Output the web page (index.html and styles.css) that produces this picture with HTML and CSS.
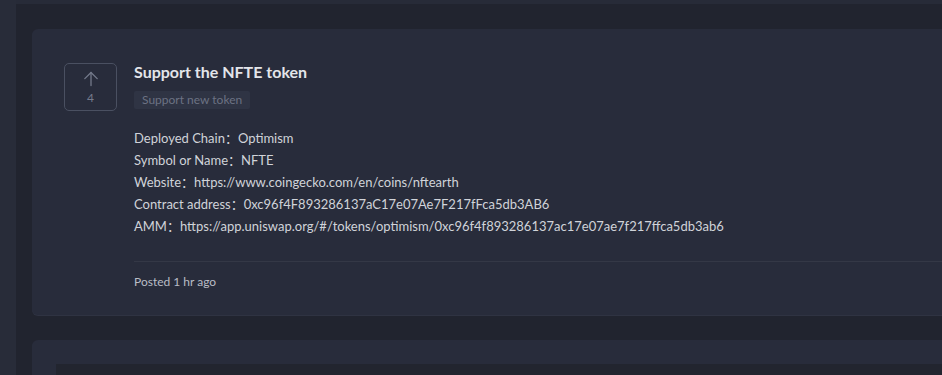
FILE: index.html
```html
<!DOCTYPE html>
<html>
<head>
    <meta charset="utf-8">
    <title>Feature requests</title>
    <link rel="stylesheet" href="styles.css">
</head>
<body>
<div class="layout">
    <aside class="sidebar"></aside>
    <main class="main">
        <div class="topbar"></div>

        <div class="card">
            <div class="post">
                <div class="vote">
                    <svg class="vote-arrow" width="16" height="16" viewBox="0 0 16 16" fill="none" stroke="currentColor" stroke-width="1.3" stroke-linecap="round" stroke-linejoin="round">
                        <path d="M8 14.5V1.5"/>
                        <path d="M1.8 7.6L8 1.5l6.2 6.1"/>
                    </svg>
                    <span class="vote-count">4</span>
                </div>
                <div class="post-body">
                    <h2 class="post-title">Support the NFTE token</h2>
                    <span class="tag">Support new token</span>
                    <div class="details">
                        <p>Deployed Chain：Optimism</p>
                        <p>Symbol or Name：NFTE</p>
                        <p>Website：https://www.coingecko.com/en/coins/nftearth</p>
                        <p>Contract address：0xc96f4F893286137aC17e07Ae7F217fFca5db3AB6</p>
                        <p>AMM：https://app.uniswap.org/#/tokens/optimism/0xc96f4f893286137ac17e07ae7f217ffca5db3ab6</p>
                    </div>
                    <div class="post-footer">Posted 1 hr ago</div>
                </div>
            </div>
        </div>

        <div class="card card-next">
            <div class="inner-box"></div>
        </div>
    </main>
</div>
</body>
</html>
```

FILE: styles.css
```css
html, body {
    margin: 0;
    padding: 0;
    height: 100%;
    background: #21242f;
    font-family: Lato, "Noto Sans", "Noto Sans CJK SC", sans-serif;
    overflow: hidden;
}
.layout {
    display: flex;
    height: 100%;
}
.sidebar {
    width: 16px;
    flex-shrink: 0;
    background: #282c39;
}
.main {
    flex: 1;
    overflow: hidden;
    padding-left: 16px;
}
.topbar {
    height: 4px;
    margin-left: -16px;
    background: #272b38;
    margin-bottom: 25px;
}
.card {
    width: 1000px;
    background: #282c3b;
    border-radius: 6px;
    box-shadow: 0 1px 0 #2f3342;
    padding: 34px 32px 24px;
    box-sizing: border-box;
}
.post {
    display: flex;
    gap: 17px;
}
.vote {
    width: 53px;
    height: 48px;
    box-sizing: border-box;
    border: 1px solid #4a5061;
    border-radius: 5px;
    display: flex;
    flex-direction: column;
    align-items: center;
    color: #747a8b;
    flex-shrink: 0;
}
.vote-arrow {
    margin-top: 7px;
}
.vote-count {
    font-size: 12px;
    line-height: 14px;
    margin-top: 4px;
}
.post-body {
    flex: 1;
}
.post-title {
    margin: 0;
    font-size: 16px;
    line-height: 18px;
    font-weight: 700;
    color: #e3e5ea;
}
.tag {
    display: inline-block;
    margin-top: 10px;
    padding: 0 8px;
    height: 18px;
    line-height: 18px;
    font-size: 12px;
    color: #6c7283;
    background: #2f3444;
    border-radius: 2px;
}
.details {
    margin-top: 18px;
    font-size: 13px;
    line-height: 22px;
    color: #d0d3d9;
}
.details p {
    margin: 0;
}
.post-footer {
    margin-top: 24px;
    border-top: 1px solid #343846;
    padding-top: 11px;
    font-size: 12px;
    line-height: 18px;
    color: #b9bdc6;
}
.card-next {
    margin-top: 25px;
    height: 80px;
    padding: 24px;
}
.inner-box {
    height: 60px;
    background: #22252f;
}
```
